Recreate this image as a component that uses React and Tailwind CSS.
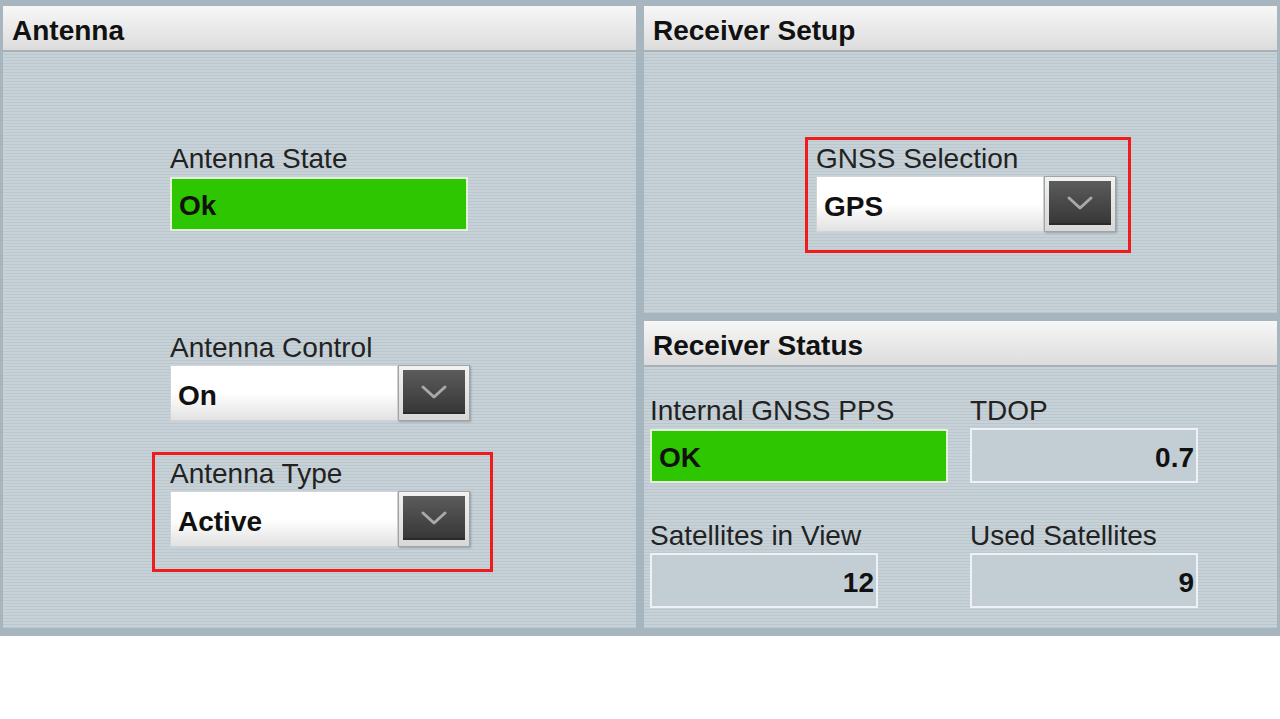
import React from 'react'

const STRIPES =
  'bg-[repeating-linear-gradient(180deg,#c7d2d8_0px,#c7d2d8_2px,#bbc7cd_2px,#bbc7cd_3px)]'

function PanelHeader({ title }) {
  return (
    <div className="h-[46px] shrink-0 flex items-center pl-[9px] pt-[6px] bg-gradient-to-b from-[#f7f7f7] to-[#dcdcdc] border-b-2 border-[#a6b2b8] text-[28px] font-bold text-[#111] leading-none">
      {title}
    </div>
  )
}

function Label({ children }) {
  return <div className="h-[28px] leading-[30px] text-[28px] text-[#222] whitespace-nowrap">{children}</div>
}

function Chevron() {
  return (
    <svg width="28" height="16" viewBox="0 0 28 16" fill="none">
      <path d="M3 3 L14 13 L25 3" stroke="#a9a9a9" strokeWidth="3" strokeLinecap="round" strokeLinejoin="round" />
    </svg>
  )
}

function Select({ value, width = 'w-[300px]' }) {
  return (
    <div className={`flex ${width} h-[56px] mt-[4px]`}>
      <div className="flex-1 flex items-center pl-[7px] pt-[5px] bg-gradient-to-b from-white via-white to-[#e2e2e2] border border-[#d0d4d6] text-[28px] font-bold text-[#111]">
        {value}
      </div>
      <div className="w-[72px] p-[4px] pb-[6px] bg-gradient-to-b from-[#f2f2f2] to-[#d8d8d8] border border-[#9ea4a8] shadow-[1px_1px_2px_rgba(0,0,0,0.25)]">
        <div className="h-full flex items-center justify-center bg-gradient-to-b from-[#5c5c5c] to-[#363636] shadow-[inset_0_-2px_0_#2a2a2a]">
          <Chevron />
        </div>
      </div>
    </div>
  )
}

function StatusBox({ value, width = 'w-[298px]' }) {
  return (
    <div className={`${width} h-[54px] mt-[5px] flex items-center pl-[7px] pt-[4px] bg-[#2ec600] border-2 border-[#e3f1dc] text-[28px] font-bold text-[#111]`}>
      {value}
    </div>
  )
}

function NumberBox({ value }) {
  return (
    <div className="w-[228px] h-[55px] mt-[4px] flex items-center justify-end pr-[2px] pt-[4px] bg-[#c3ced4] border-2 border-[#eef2f4] text-[28px] font-bold text-[#111]">
      {value}
    </div>
  )
}

export default function App() {
  return (
    <div className="w-[1280px] h-[719px] bg-white font-['Liberation_Sans',Arial,sans-serif]">
      <div className="h-[636px] flex gap-[8px] px-[3px] pt-[6px] pb-[8px] bg-[#a7b6be]">
        {/* Antenna */}
        <div className="w-[633px] flex flex-col">
          <PanelHeader title="Antenna" />
          <div className={`flex-1 ${STRIPES} pl-[167px] pt-[92px]`}>
            <Label>Antenna State</Label>
            <StatusBox value="Ok" />

            <div className="mt-[102px]">
              <Label>Antenna Control</Label>
              <Select value="On" />
            </div>

            <div className="mt-[31px] -ml-[18px] w-[341px] h-[120px] border-[3px] border-[#ee1c1c] pl-[15px] pt-[4px]">
              <Label>Antenna Type</Label>
              <Select value="Active" />
            </div>
          </div>
        </div>

        {/* Receiver */}
        <div className="w-[633px] flex flex-col gap-[8px]">
          <div className="h-[307px] flex flex-col">
            <PanelHeader title="Receiver Setup" />
            <div className={`flex-1 ${STRIPES} pl-[161px] pt-[85px]`}>
              <div className="w-[326px] h-[116px] border-[3px] border-[#ee1c1c] pl-[8px] pt-[4px]">
                <Label>GNSS Selection</Label>
                <Select value="GPS" />
              </div>
            </div>
          </div>

          <div className="h-[307px] flex flex-col">
            <PanelHeader title="Receiver Status" />
            <div className={`flex-1 ${STRIPES} pl-[6px] pt-[29px]`}>
              <div className="flex">
                <div className="w-[320px]">
                  <Label>Internal GNSS PPS</Label>
                  <StatusBox value="OK" />
                </div>
                <div>
                  <Label>TDOP</Label>
                  <NumberBox value="0.7" />
                </div>
              </div>
              <div className="flex mt-[38px]">
                <div className="w-[320px]">
                  <Label>Satellites in View</Label>
                  <NumberBox value="12" />
                </div>
                <div>
                  <Label>Used Satellites</Label>
                  <NumberBox value="9" />
                </div>
              </div>
            </div>
          </div>
        </div>
      </div>
    </div>
  )
}
